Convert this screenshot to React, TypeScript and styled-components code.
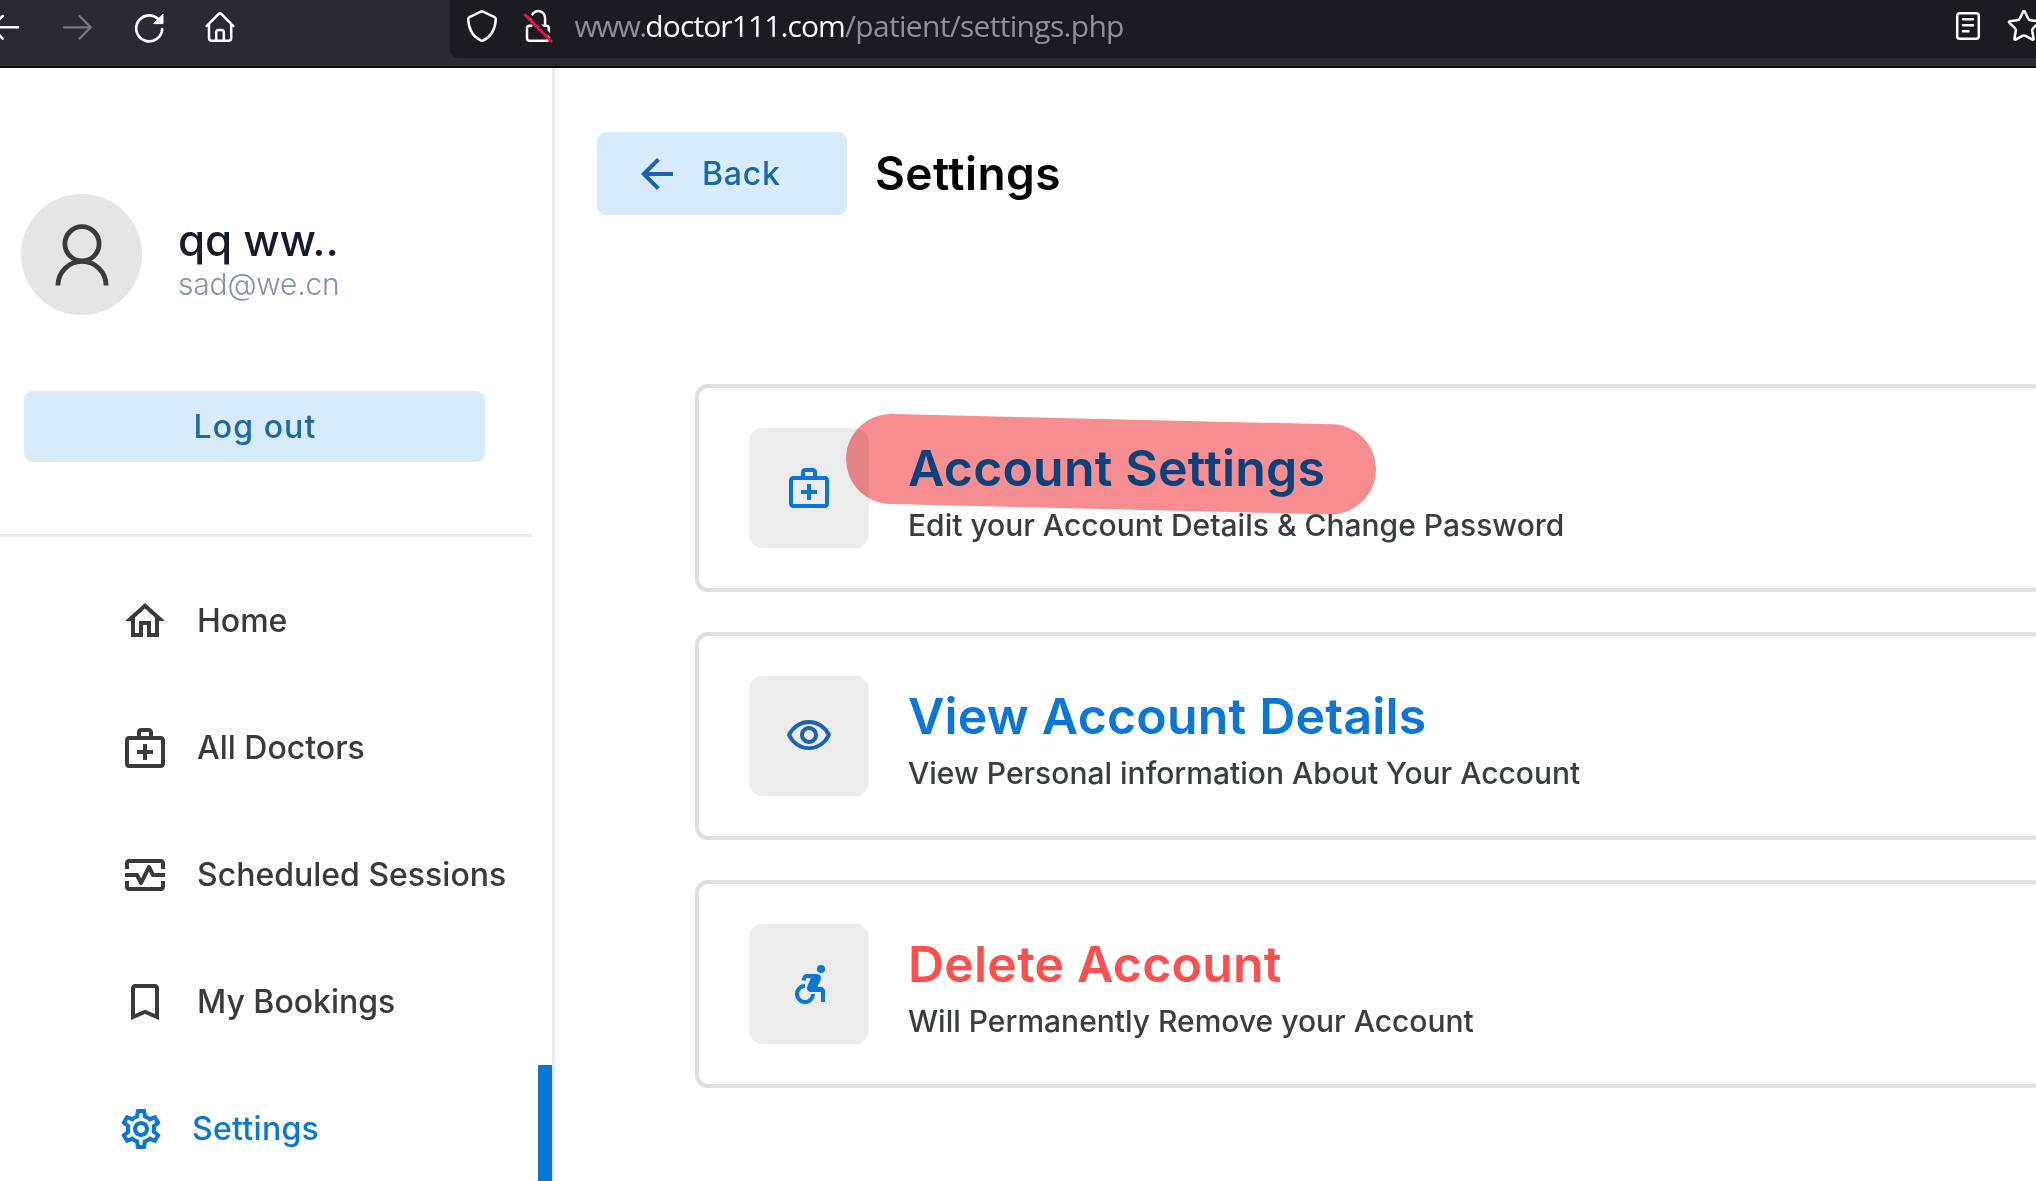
import React from "react";
import styled, { createGlobalStyle } from "styled-components";
import { Star } from "lucide-react";

const blue = "#0a76d8";
const deepBlue = "#1b62b3";
const ink = "#3a3a3a";

const GlobalStyle = createGlobalStyle`
  * { box-sizing: border-box; }
  body {
    margin: 0;
    background: #fff;
    font-family: Inter, "Liberation Sans", sans-serif;
    overflow: hidden;
  }
  svg { display: block; flex: none; }
`;

const Page = styled.div`
  display: flex;
  flex-direction: column;
  width: 100vw;
  height: 100vh;
  overflow: hidden;
  background: #fff;
`;

/* ---------- browser toolbar ---------- */

const Toolbar = styled.header`
  display: flex;
  flex: none;
  height: 68px;
  background: #2b2a33;
  border-bottom: 2px solid #0c0c0d;
`;

const NavButtons = styled.div`
  display: flex;
  flex: none;
  width: 481px;
  margin-left: -31px;
`;

const AddressField = styled.div`
  display: flex;
  flex: 1;
  align-items: flex-start;
  height: 58px;
  padding-left: 12px;
  background: #1c1b22;
  border-bottom-left-radius: 8px;
`;

const SiteIcons = styled.div`
  display: flex;
  gap: 18px;
  width: 112.5px;
`;

const Url = styled.div`
  padding-top: 5px;
  font-family: "Open Sans", "Noto Sans", sans-serif;
  font-size: 30px;
  line-height: 41px;
  letter-spacing: -0.69px;
  white-space: nowrap;
  color: #8f8f94;
`;

const Subdomain = styled.span`
  letter-spacing: -1.7px;
`;

const Host = styled.span`
  letter-spacing: -0.9px;
  color: #fbfbfe;
`;

const FieldActions = styled.div`
  display: flex;
  gap: 22px;
  margin-left: auto;
  margin-right: -6px;
`;

const StarIcon = styled(Star)`
  margin-top: 8px;
`;

/* ---------- sidebar ---------- */

const Body = styled.div`
  display: flex;
  flex: 1;
  min-height: 0;
`;

const Sidebar = styled.aside`
  display: flex;
  flex-direction: column;
  flex: none;
  width: 555px;
  padding-top: 126px;
  border-right: 3px solid #ebebeb;
`;

const Profile = styled.div`
  display: flex;
  gap: 36px;
  padding-left: 21px;
`;

const Avatar = styled.div`
  display: grid;
  place-items: center;
  width: 121px;
  height: 121px;
  border-radius: 50%;
  background: #e5e5e5;
`;

const Identity = styled.div`
  padding-top: 20px;
  white-space: nowrap;
`;

const UserName = styled.div`
  font-size: 44px;
  line-height: 52px;
  font-weight: 500;
  letter-spacing: -0.3px;
  color: #161c2d;
`;

const UserEmail = styled.div`
  font-size: 30px;
  line-height: 36px;
  font-weight: 300;
  letter-spacing: -0.2px;
  color: #8492a6;
`;

const SoftButton = styled.button`
  display: flex;
  flex: none;
  align-items: flex-start;
  margin: 0;
  border: 0;
  border-radius: 9px;
  background: #d8ebfa;
  color: #1969aa;
  font-family: inherit;
  font-size: 32px;
  line-height: 39px;
  font-weight: 500;
  letter-spacing: 0.8px;
`;

const LogoutButton = styled(SoftButton)`
  justify-content: center;
  width: 461px;
  height: 71px;
  margin: 76px 0 0 24px;
  padding: 16px 0 0 1px;
  letter-spacing: 1.1px;
`;

const Divider = styled.hr`
  flex: none;
  width: 532px;
  height: 3px;
  margin: 72px 0 20px;
  border: 0;
  background: #ebebeb;
`;

const Menu = styled.nav`
  display: flex;
  flex-direction: column;
`;

const MenuItem = styled.a<{ $active?: boolean }>`
  display: flex;
  flex: none;
  gap: ${(p) => (p.$active ? 27 : 28)}px;
  height: 127px;
  padding: 40px 0 0 ${(p) => (p.$active ? 117 : 121)}px;
  border-right: ${(p) => (p.$active ? `14px solid ${blue}` : "0")};
  color: ${(p) => (p.$active ? blue : ink)};
  letter-spacing: ${(p) => (p.$active ? "0.3px" : "0")};
`;

const MenuLabel = styled.span`
  padding-top: 4px;
  font-size: 32px;
  line-height: 39px;
  font-weight: 500;
  white-space: nowrap;
`;

/* ---------- content ---------- */

const Main = styled.main`
  flex: 1;
  min-width: 0;
  padding: 64px 0 0 38px;
  border-left: 4px solid #fbfbfb;
`;

const Heading = styled.div`
  display: flex;
  gap: 28px;
`;

const BackButton = styled(SoftButton)`
  gap: 21px;
  width: 250px;
  height: 83px;
  padding: 18px 0 0 36px;
`;

const BackLabel = styled.span`
  padding-top: 4px;
`;

const Title = styled.h1`
  margin: 13px 0 0;
  font-size: 46px;
  line-height: 56px;
  font-weight: 600;
  letter-spacing: 0.45px;
  color: #000;
`;

const Cards = styled.div`
  display: flex;
  flex-direction: column;
  gap: 40px;
  margin: 169px -20px 0 98px;
`;

const Card = styled.section`
  position: relative;
  display: flex;
  gap: 39px;
  height: 208px;
  padding: 40px 50px;
  border: 4px solid #dddfe0;
  border-radius: 13px;
`;

const IconTile = styled.div<{ $color: string }>`
  display: grid;
  place-items: center;
  flex: none;
  width: 120px;
  height: 120px;
  border-radius: 14px;
  background: #ececec;
  color: ${(p) => p.$color};
`;

const CardText = styled.div`
  padding-top: 10px;
  white-space: nowrap;
`;

const CardTitle = styled.h2<{ $danger?: boolean }>`
  margin: 0;
  font-size: 50px;
  line-height: 60px;
  font-weight: 600;
  letter-spacing: 0.2px;
  color: ${(p) => (p.$danger ? "#ff5050" : blue)};
`;

const CardNote = styled.p`
  margin: 9px 0 0;
  font-size: 30px;
  line-height: 36px;
  font-weight: 500;
  color: #393c41;
`;

const Marker = styled.svg`
  position: absolute;
  left: 147px;
  top: 26px;
  mix-blend-mode: multiply;
`;

/* ---------- icons ---------- */

const paths = {
  home: "M12 5.69l5 4.5V18h-2v-6H9v6H7v-7.81l5-4.5M12 3L2 12h3v8h6v-6h2v6h6v-8h3L12 3z",
  medical:
    "M20 6h-4V4c0-1.1-.9-2-2-2h-4c-1.1 0-2 .9-2 2v2H4c-1.1 0-2 .9-2 2v12c0 1.1.9 2 2 2h16c1.1 0 2-.9 2-2V8c0-1.1-.9-2-2-2zM10 4h4v2h-4V4zm10 16H4V8h16v12zM13 10h-2v3H8v2h3v3h2v-3h3v-2h-3z",
  monitor:
    "M20 4H4c-1.1 0-2 .9-2 2v3h2V6h16v3h2V6c0-1.1-.9-2-2-2zM20 18H4v-3H2v3c0 1.1.9 2 2 2h16c1.1 0 2-.9 2-2v-3h-2v3zM14.89 7.55c-.34-.68-1.45-.68-1.79 0L10 13.76l-1.11-2.21A.988.988 0 0 0 8 11H2v2h5.38l1.72 3.45c.18.34.52.55.9.55s.72-.21.89-.55L14 10.24l1.11 2.21c.17.34.51.55.89.55h6v-2h-5.38l-1.73-3.45z",
  bookmark: "M17 3H7c-1.1 0-1.99.9-1.99 2L5 21l7-3 7 3V5c0-1.1-.9-2-2-2zm0 15l-5-2.18L7 18V5h10v13z",
  settings:
    "M19.43 12.98c.04-.32.07-.64.07-.98 0-.34-.03-.66-.07-.98l2.11-1.65c.19-.15.24-.42.12-.64l-2-3.46a.5.5 0 0 0-.61-.22l-2.49 1c-.52-.4-1.08-.73-1.69-.98l-.38-2.65A.488.488 0 0 0 14 2h-4c-.25 0-.46.18-.49.42l-.38 2.65c-.61.25-1.17.59-1.69.98l-2.49-1a.566.566 0 0 0-.18-.03c-.17 0-.34.09-.43.25l-2 3.46c-.13.22-.07.49.12.64l2.11 1.65c-.04.32-.07.65-.07.98 0 .33.03.66.07.98l-2.11 1.65c-.19.15-.24.42-.12.64l2 3.46a.5.5 0 0 0 .61.22l2.49-1c.52.4 1.08.73 1.69.98l.38 2.65c.03.24.24.42.49.42h4c.25 0 .46-.18.49-.42l.38-2.65c.61-.25 1.17-.59 1.69-.98l2.49 1c.06.02.12.03.18.03.17 0 .34-.09.43-.25l2-3.46c.12-.22.07-.49-.12-.64l-2.11-1.65zm-1.98-1.71c.04.31.05.52.05.73 0 .21-.02.43-.05.73l-.14 1.13.89.7 1.08.84-.7 1.21-1.27-.51-1.04-.42-.9.68c-.43.32-.84.56-1.25.73l-1.06.43-.16 1.13-.2 1.35h-1.4l-.19-1.35-.16-1.13-1.06-.43c-.43-.18-.83-.41-1.23-.71l-.91-.7-1.06.43-1.27.51-.7-1.21 1.08-.84.89-.7-.14-1.13c-.03-.31-.05-.54-.05-.74s.02-.43.05-.73l.14-1.13-.89-.7-1.08-.84.7-1.21 1.27.51 1.04.42.9-.68c.43-.32.84-.56 1.25-.73l1.06-.43.16-1.13.2-1.35h1.39l.19 1.35.16 1.13 1.06.43c.43.18.83.41 1.23.71l.91.7 1.06-.43 1.27-.51.7 1.21-1.07.85-.89.7.14 1.13zM12 8c-2.21 0-4 1.79-4 4s1.79 4 4 4 4-1.79 4-4-1.79-4-4-4zm0 6c-1.1 0-2-.9-2-2s.9-2 2-2 2 .9 2 2-.9 2-2 2z",
  back: "M20 11H7.83l5.59-5.59L12 4l-8 8 8 8 1.41-1.41L7.83 13H20v-2z",
  eye: "M12 6a9.77 9.77 0 0 1 8.82 5.5 9.76 9.76 0 0 1-17.64 0A9.77 9.77 0 0 1 12 6m0-2C7 4 2.73 7.11 1 11.5 2.73 15.89 7 19 12 19s9.27-3.11 11-7.5C21.27 7.11 17 4 12 4zm0 5a2.5 2.5 0 0 1 0 5 2.5 2.5 0 0 1 0-5m0-2c-2.48 0-4.5 2.02-4.5 4.5S9.52 16 12 16s4.5-2.02 4.5-4.5S14.48 7 12 7z",
  wheelchair:
    "M20 4.54a2 2 0 1 1-4 0 2 2 0 0 1 4 0zM15 17h-2c0 1.65-1.35 3-3 3s-3-1.35-3-3 1.35-3 3-3v-2c-2.76 0-5 2.24-5 5s2.24 5 5 5 5-2.24 5-5zm3-3.5h-1.86l1.67-3.67C18.42 8.5 17.44 7 15.96 7h-5.2c-.81 0-1.54.47-1.87 1.2L8.22 10l1.92.53.65-1.53H13l-1.83 4.1c-.6 1.33.39 2.9 1.85 2.9H18v5h2v-5.5c0-1.1-.9-2-2-2z",
};

type IconName = keyof typeof paths;

const Icon = ({ name, color = "currentColor" }: { name: IconName; color?: string }) => (
  <svg width="48" height="48" viewBox="0 0 24 24" fill={color}>
    <path d={paths[name]} />
  </svg>
);

const ToolIcon = ({
  width = 72,
  color = "#fbfbfe",
  children,
}: {
  width?: number;
  color?: string;
  children: React.ReactNode;
}) => (
  <svg
    width={width}
    height="56"
    viewBox={`0 0 ${width} 56`}
    fill="none"
    stroke={color}
    strokeWidth="2.5"
    strokeLinecap="round"
    strokeLinejoin="round"
  >
    {children}
  </svg>
);

const PersonIcon = () => (
  <svg width="60" height="64" viewBox="0 0 60 64" fill="none" stroke={ink} strokeWidth="4.8">
    <circle cx="30" cy="20.8" r="17.1" />
    <path d="M5.9 62.5a24.1 24.1 0 0 1 48.2 0" />
  </svg>
);

const menu: { icon: IconName; label: string }[] = [
  { icon: "home", label: "Home" },
  { icon: "medical", label: "All Doctors" },
  { icon: "monitor", label: "Scheduled Sessions" },
  { icon: "bookmark", label: "My Bookings" },
  { icon: "settings", label: "Settings" },
];

const cards: {
  icon: IconName;
  color: string;
  title: string;
  note: string;
  danger?: boolean;
  marked?: boolean;
}[] = [
  {
    icon: "medical",
    color: blue,
    title: "Account Settings",
    note: "Edit your Account Details & Change Password",
    marked: true,
  },
  {
    icon: "eye",
    color: deepBlue,
    title: "View Account Details",
    note: "View Personal information About Your Account",
  },
  {
    icon: "wheelchair",
    color: blue,
    title: "Delete Account",
    note: "Will Permanently Remove your Account",
    danger: true,
  },
];

export default function App() {
  return (
    <Page>
      <GlobalStyle />
      <Toolbar>
        <NavButtons>
          <ToolIcon>
            <path d="M49 27.3H22M33.8 16L22.5 27.3l11.3 11.3" />
          </ToolIcon>
          <ToolIcon color="#78777d">
            <path d="M23 27.3h26.5M38.5 16l11.3 11.3-11.3 11.3" strokeWidth="2.2" />
          </ToolIcon>
          <ToolIcon>
            <path d="M49.2 29A13 13 0 1 1 45 18.8" strokeWidth="2.7" />
            <path d="M50 14.5V23.6H41z" fill="#fbfbfe" strokeWidth="1" />
          </ToolIcon>
          <ToolIcon>
            <path d="M21.6 26.2L33.5 14.1q1.5-1.4 3 0l11.9 12.1M24 24v14q0 2.8 2.6 2.8h17q2.6 0 2.6-2.8V24M31.2 40.6v-8q0-2.6 2.4-2.6h2.8q2.4 0 2.4 2.6v8" />
          </ToolIcon>
        </NavButtons>
        <AddressField>
          <SiteIcons>
            <ToolIcon width={40}>
              <path d="M20 11.2l12.6 6q1.3.7 1.2 2.2C33.3 29 29.6 36.4 21 40.6q-1 .4-2 0C10.4 36.4 6.7 29 6.2 19.4q-.1-1.5 1.200-2.200z" />
            </ToolIcon>
            <ToolIcon width={36}>
              <path d="M11.3 18.5v-.5a6.9 6.9 0 0 1 13.8 0v7.5M11.3 25.8H9.5q-2.5 0-2.5 2.5v10q0 2.5 2.5 2.5h16.8q2.5 0 2.5-2.5v-10q0-2.5-2.5-2.5h-7" />
              <path d="M7.5 13L35 40" stroke="#1c1b22" strokeWidth="3" />
              <path d="M5.2 15l26 26.2" stroke="#ff0a45" strokeWidth="2.8" />
            </ToolIcon>
          </SiteIcons>
          <Url>
            <Subdomain>www.</Subdomain>
            <Host>doctor111.com</Host>/patient/settings.php
          </Url>
          <FieldActions>
            <ToolIcon width={32}>
              <rect x="5.2" y="13.2" width="21.6" height="25.6" rx="2.6" />
              <path d="M11 19.2h10M11 25.2h10M11 31.2h5.5" />
            </ToolIcon>
            <StarIcon size={36} strokeWidth={1.7} color="#fbfbfe" />
          </FieldActions>
        </AddressField>
      </Toolbar>

      <Body>
        <Sidebar>
          <Profile>
            <Avatar>
              <PersonIcon />
            </Avatar>
            <Identity>
              <UserName>qq ww..</UserName>
              <UserEmail>sad@we.cn</UserEmail>
            </Identity>
          </Profile>
          <LogoutButton>Log out</LogoutButton>
          <Divider />
          <Menu>
            {menu.map((m) => (
              <MenuItem key={m.label} $active={m.icon === "settings"}>
                <Icon name={m.icon} />
                <MenuLabel>{m.label}</MenuLabel>
              </MenuItem>
            ))}
          </Menu>
        </Sidebar>

        <Main>
          <Heading>
            <BackButton>
              <Icon name="back" color={deepBlue} />
              <BackLabel>Back</BackLabel>
            </BackButton>
            <Title>Settings</Title>
          </Heading>
          <Cards>
            {cards.map((c) => (
              <Card key={c.title}>
                <IconTile $color={c.color}>
                  <Icon name={c.icon} />
                </IconTile>
                <CardText>
                  <CardTitle $danger={c.danger}>{c.title}</CardTitle>
                  <CardNote>{c.note}</CardNote>
                </CardText>
                {c.marked && (
                  <Marker width="531" height="101" viewBox="0 0 531 101">
                    <path d="M45 45L485 55.3" stroke="#f68e91" strokeWidth="90" strokeLinecap="round" />
                  </Marker>
                )}
              </Card>
            ))}
          </Cards>
        </Main>
      </Body>
    </Page>
  );
}
